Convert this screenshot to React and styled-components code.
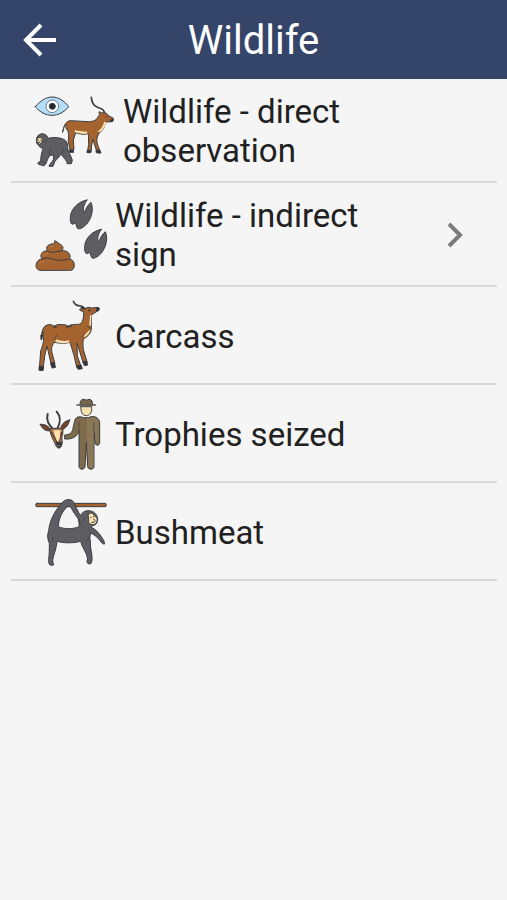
import React from 'react';
import styled, { createGlobalStyle } from 'styled-components';

const OUTLINE = '#3b3d42';
const BROWN = '#a5632f';
const GREY = '#5d5d62';
const CREAM = '#fbe0b0';

const DirectObservationIcon = () => (
  <Icon $wide viewBox="21 21 240 216" aria-hidden="true">
    <g stroke={OUTLINE} strokeWidth="3" strokeLinejoin="round" strokeLinecap="round">
      <path fill="#b4def5" d="M22 56C37 38 54 27 72 27s36 10 50 29C108 73 91 82 72 82S36 73 22 56z" />
      <circle cx="73" cy="55" r="19" fill="#fff" stroke="#6c7d8b" />
      <circle cx="73" cy="55" r="9" fill="#222529" />
      <path fill="none" strokeWidth="5" d="M190 28c1 16 5 24 17 29c13 5 22 7 23 20" />
      <path
        fill={BROWN}
        d="M104 132c4-20 10-34 24-34l54 3c14 0 25-5 29-17l5-4c-4-4-4-6-2-9l8 4c8-3 15 1 20 8l14 8c2 5 0 9-6 10l-16 1c-5 12-8 26-21 33l-5 12c-3 8-1 18 2 27l9 21h-11l-8-24-5-17-4 17-2 22h-11l4-24-1-32c-12 3-25 2-38-3l-7 22 2 29h-12l-5-27c1-11 1-22-2-33-5 3-6-9-5-17-7 6-7 15-10 24z"
      />
      <path fill={CREAM} stroke="none" d="M141 126c13 4 25 5 37 5l-1 6c-13 1-25 0-37-5zM229 101l6 2c-4 13-9 24-19 29l-8-1c11-7 17-18 21-30z" />
      <path fill="#303238" d="M126 186h9l2 7h-11zM179 187h9v7h-10zM205 187h10l3 7h-12zM249 96l6-2-1 6-6 1z" />
      <circle cx="235" cy="86" r="1" fill="#303238" />
      <path
        fill={GREY}
        d="M27 149c2-9 11-14 21-11 7 2 11 8 12 13 15-4 34-3 47 3 10 5 13 15 12 25 1 13 10 23 14 38l-3 10h-13c1-6-3-9-7-15l-11-14c-5 9-13 16-18 22l-6 15H63c1-8 9-11 13-20l1-15-14 4c-2 8-7 14-9 22-3 6-5 10-12 6l-12-4c-1-5 3-7 8-8 0-15 3-28 8-40-6 1-11-1-14-8-8-5-8-15-5-23z"
      />
      <path fill={CREAM} d="M28 150c8-4 16-1 15 5-1 8-5 14-9 14-7-3-9-13-6-19z" />
      <path fill="none" strokeWidth="2" d="M49 162c3-1 5-3 6-7M63 204l5-26M102 197c4-5 4-10 3-14M41 221l10 4" />
      <path stroke="#303238" d="M31 156h1M38 156h1M32 163h3" />
    </g>
  </Icon>
);

const Hoof = ({ transform }) => (
  <path
    transform={transform}
    fill={GREY}
    d="M177 30c-25 4-49 26-50 52-1 9 0 16 5 21l9-3c6 4 3 13 10 17 11-1 23-10 31-23 10-16 15-38 7-57-9 7-15 18-20 31-6-8-2-24 8-38z"
  />
);

const IndirectSignIcon = () => (
  <Icon viewBox="21 27 216 216" aria-hidden="true">
    <g stroke={OUTLINE} strokeWidth="3" strokeLinejoin="round" strokeLinecap="round">
      <Hoof />
      <Hoof transform="translate(43 88)" />
      <path
        fill={BROWN}
        d="M35 241c-11-2-13-13-9-22 3-8 8-11 16-12-8-11-1-25 17-25-8-10 1-19 13-20 8-1 9-5 8-10 10 4 15 11 20 13 7 5 6 12 1 17 17-1 29 8 24 25 16 2 18 27 7 33-3 2-7 1-11 1z"
      />
      <path fill="none" d="M59 184c13 5 26 2 41-2M42 207c14-5 23-3 34 1 16 5 30 3 46-1" />
      <path fill="none" stroke="#c2824f" d="M47 197c3-5 8-7 14-7M66 173c3-3 8-3 12-5M34 222c3-5 8-7 15-6" />
    </g>
  </Icon>
);

const CarcassIcon = () => (
  <Icon viewBox="21 18 216 216" aria-hidden="true">
    <g stroke={OUTLINE} strokeWidth="3" strokeLinejoin="round" strokeLinecap="round">
      <path fill="none" strokeWidth="5" d="M136 22c4 11 12 14 22 14 9 1 12 5 14 12M160 40l10 9" />
      <path
        fill={BROWN}
        d="M39 135c3-17 3-35 16-41 9-4 18-2 23 3 7-8 37-7 44 0 6-9 26-3 36-8 8-7 9-21 9-34l-13-8c5-4 10-4 15-1 6-6 15-8 22-4l20-2c4 4 2 9-2 11l-18 11c-3 14 1 25-1 39 1 16-10 26-24 34-2 13-2 28 3 42l9 29-12 2-9-29-10-32 1 39 11 31c-3 7-7 6-12 6l-9-38c-3-13-8-26-12-40-14 4-29 4-46 0-10 10-11 20-7 35l8 30c-3 6-6 5-11 4l-9-41-4-17-7 31-5 39H34l4-55c4-12 10-24 8-39 0-7-2-13-1-18z"
      />
      <path fill={CREAM} stroke="none" d="M84 136c14 5 28 6 39 3l2 6c-14 4-29 3-43-2zM186 63l5 1c-3 14 0 25-2 33l-5-4zM168 125c7-6 12-14 20-19-2 10-10 20-19 24z" />
      <path fill="none" strokeWidth="5" d="M78 99l6 1M117 99l12-3" />
      <path fill="none" strokeWidth="2" d="M179 98l12 7M159 131c4-3 7-9 11-11M78 136c5-3 7-9 7-15" />
      <path fill="#303238" d="M35 216l12 2-2 12-11-1zM69 207l9-1 5 14-10 2zM148 215l11-2 4 11-11 2zM166 203l9-2 4 12-9 2zM207 43l7-1-2 8-6 1zM39 124l5-1-3 13z" />
      <circle cx="184" cy="49" r="2" fill="#303238" />
    </g>
  </Icon>
);

const TrophiesIcon = () => (
  <Icon viewBox="21 18 216 216" aria-hidden="true">
    <g stroke={OUTLINE} strokeWidth="3" strokeLinejoin="round" strokeLinecap="round">
      <path
        fill="#7d6b4c"
        d="M148 76c6-3 12-2 18 1h15c6-3 14-5 21-2 8 3 12 8 13 17v60c0 10-13 10-14 1l-3-42v113c0 10-18 10-19 0l-4-72-4 72c-1 10-18 10-18 0V119c-7 13-17 24-43 22v-12c16-1 21-7 24-16l6-25c1-6 3-10 8-12z"
      />
      <path fill="#8b7856" stroke="none" d="M176 79h6c7-2 14-4 19-1 7 2 11 7 11 15v56h-8l-7-50v123c0 8-14 8-15 1l-5-78z" />
      <path fill="none" d="M153 91v28M197 91v22" strokeWidth="2" />
      <path fill={CREAM} d="M159 44h32c2 16-5 27-16 27s-18-11-16-27z" />
      <path fill="#796549" d="M156 38c0-11 4-17 12-16 5 3 9 2 15 0 8 0 11 6 11 16z" />
      <path fill="none" strokeWidth="5" stroke="#575650" d="M147 39h55" />
      <path fill="none" strokeWidth="6" d="M59 66c-6 20 4 32 16 45M86 59c15 17 11 33 2 51" />
      <path fill="#74432a" d="M37 97c12-1 26 4 32 19-14 3-27-4-32-19zM125 84c-3 15-11 26-27 30-1-16 13-28 27-30z" />
      <path fill="#b4774b" d="M66 111c9-3 30-3 39 0l-1 17c-4 6-2 14-1 22-1 11-5 18-11 18-8 0-9-11-14-19-4-10-11-19-12-38z" />
      <path fill={CREAM} stroke="none" d="M76 115h22c-3 9-2 18 0 28l-11 6c-4-13-9-22-11-34z" />
      <path fill="none" strokeWidth="4" stroke="#663d2a" d="M71 121l16 31M102 121l-7 25" />
      <path fill="#333238" d="M85 151h15c3 7-2 17-7 17-7-3-7-11-8-17z" />
      <path fill="none" stroke="#aaa18f" strokeWidth="2" d="M89 161h7" />
    </g>
  </Icon>
);

const BushmeatIcon = () => (
  <Icon viewBox="21 18 216 216" aria-hidden="true">
    <g stroke={OUTLINE} strokeWidth="3" strokeLinejoin="round" strokeLinecap="round">
      <rect x="23" y="40" width="212" height="10" rx="4" fill={BROWN} />
      <path
        fill={GREY}
        fillRule="evenodd"
        d="M102 39c7-12 26-14 34-4 7 13 13 30 22 42 3-9 12-15 22-15 17 0 28 11 29 25 0 12-6 20-17 20l-2 5c16 7 28 24 37 39l3 11c-5 1-8-2-10-5-9-13-19-22-32-28-3 8-3 17-1 24-2 21 7 37 5 57-2 9 0 11-8 12-7-1-9-7-5-15-2-20-18-35-21-53-22 6-49 6-71 0-1 21-10 38-13 56-1 9 8 15-1 16-11 1-12-9-11-17 2-18 2-33 2-49-5-11-7-26-2-38 3-29 16-58 40-83zM112 56C100 70 92 88 91 110c18 8 44 8 62 0 1-8 0-15-2-23-8-11-16-22-21-33-4-7-12-6-18 2z"
      />
      <path fill={CREAM} d="M180 74c5-5 12-7 15-3 4 7 9 9 13 16 0 11-5 17-14 17-8-1-14-6-12-11 1-6-1-12-2-19z" />
      <path stroke="#2e3035" d="M188 82h1M196 80h1M197 88l2 1M191 97c5 1 9-1 12-5" fill="none" />
      <path fill="none" strokeWidth="2" d="M154 86c-2 10 1 17 6 22M75 143c-2 5-2 8-1 12M186 136c-3 9-6 14-11 18M170 81c-4 3-4 9 0 12" />
    </g>
  </Icon>
);

const items = [
  { label: 'Wildlife - direct observation', icon: DirectObservationIcon },
  { label: 'Wildlife - indirect sign', icon: IndirectSignIcon, hasChildren: true },
  { label: 'Carcass', icon: CarcassIcon },
  { label: 'Trophies seized', icon: TrophiesIcon },
  { label: 'Bushmeat', icon: BushmeatIcon },
];

const App = () => {
  return (
    <>
      <GlobalStyle />
      <Header>
        <BackButton type="button" aria-label="Back">
          <svg width="34" height="34" viewBox="0 0 34 34" fill="none" stroke="#fff" strokeWidth="4">
            <path d="M33 17H4M18 2L3 17l15 15" />
          </svg>
        </BackButton>
        <Title>Wildlife</Title>
      </Header>
      <main>
        <List>
          {items.map(({ label, icon: ItemIcon, hasChildren }) => (
            <li key={label}>
              <RowButton type="button">
                <ItemIcon />
                <Label>{label}</Label>
                {hasChildren && (
                  <Chevron>
                    <svg width="18" height="26" viewBox="0 0 18 26" fill="none" stroke="#7b7b7b" strokeWidth="4">
                      <path d="M3 2l11 11L3 24" />
                    </svg>
                  </Chevron>
                )}
              </RowButton>
            </li>
          ))}
        </List>
      </main>
    </>
  );
};

const GlobalStyle = createGlobalStyle`
  * {
    box-sizing: border-box;
  }

  body {
    margin: 0;
    background-color: #f5f5f5;
    color: #212121;
    font-family: Roboto, sans-serif;
  }
`;

const Header = styled.header`
  display: grid;
  grid-template-columns: 80px 1fr 80px;
  align-items: center;
  height: 79px;
  background-color: #354469;
  color: #fff;
`;

const BackButton = styled.button`
  display: flex;
  align-items: center;
  justify-content: center;
  height: 100%;
  padding: 0;
  border: none;
  background: none;
  cursor: pointer;
`;

const Title = styled.h1`
  margin: 0;
  padding-top: 2px;
  font-size: 40px;
  font-weight: 400;
  line-height: 48px;
  text-align: center;
`;

const List = styled.ul`
  margin: 0 10px 0 11px;
  padding: 0;
  list-style: none;
`;

const RowButton = styled.button`
  display: flex;
  align-items: center;
  gap: 8px;
  width: 100%;
  padding: 13px 0 11px 24px;
  border: none;
  border-bottom: 2px solid #d8d8d8;
  background: none;
  color: inherit;
  font-family: inherit;
  font-size: 33px;
  line-height: 39px;
  text-align: left;
  cursor: pointer;
`;

const Icon = styled.svg`
  flex: none;
  width: ${({ $wide }) => ($wide ? '80px' : '72px')};
  height: 72px;
  overflow: visible;
`;

const Label = styled.span`
  flex: 1;
`;

const Chevron = styled.span`
  display: flex;
  flex: none;
  justify-content: center;
  width: 84px;
`;

export default App;
